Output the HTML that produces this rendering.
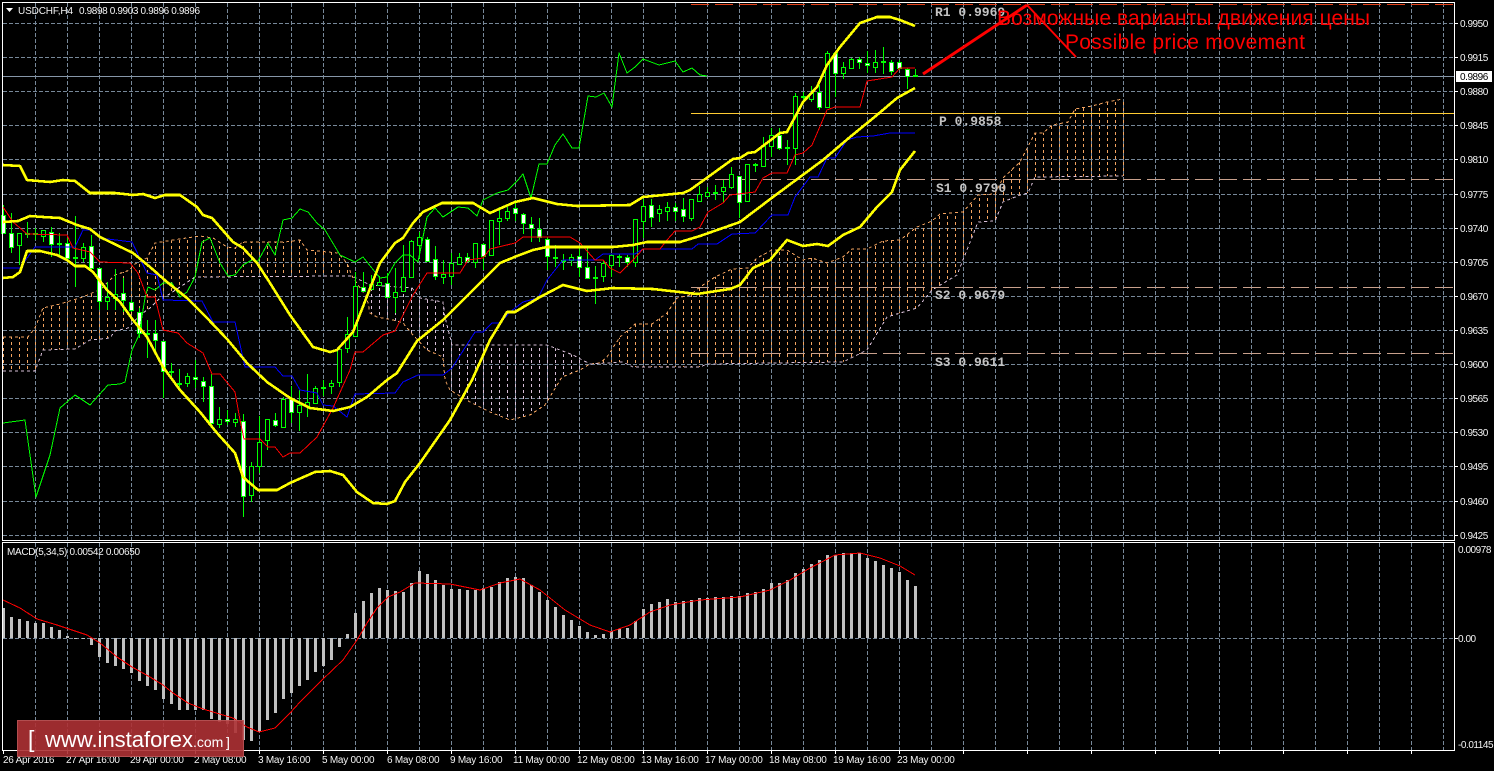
<!DOCTYPE html>
<html><head><meta charset="utf-8"><title>USDCHF,H4</title>
<style>
html,body{margin:0;padding:0;background:#000;width:1494px;height:771px;overflow:hidden}
svg{display:block}
.t{font-family:"Liberation Sans",sans-serif;font-size:10px;fill:#f4f4f4}
.p{letter-spacing:-.45px}
.a{letter-spacing:-.25px}
.f{font-family:"Liberation Mono",monospace;font-size:13px;font-weight:bold;fill:#c4c4c4}
.r{font-family:"Liberation Sans","Noto Sans CJK SC",sans-serif;font-size:21px;fill:#f00}
.l{font-family:"Liberation Sans",sans-serif;fill:#fff}
</style></head><body>
<svg width="1494" height="771" viewBox="0 0 1494 771" xmlns="http://www.w3.org/2000/svg">
<defs>
<pattern id="gv" x="0" y="3" width="32" height="6" patternUnits="userSpaceOnUse"><rect x="3" width="1" height="4" fill="#778899"/></pattern>
<pattern id="po" x="0" y="0" width="8" height="6" patternUnits="userSpaceOnUse"><rect x="3" width="1" height="3" fill="#f4a460"/></pattern>
<pattern id="pt" x="0" y="0" width="8" height="6" patternUnits="userSpaceOnUse"><rect x="3" width="1" height="3" fill="#d8bfd8"/></pattern>
</defs>
<rect width="1494" height="771" fill="#000"/>

<!-- grid -->
<rect x="32" y="3" width="1420" height="537" fill="url(#gv)" shape-rendering="crispEdges"/>
<rect x="32" y="543" width="1420" height="207" fill="url(#gv)" shape-rendering="crispEdges"/>
<path shape-rendering="crispEdges" fill="none" stroke="#778899" stroke-dasharray="4 2" d="M3 23.5H1454M3 57.5H1454M3 91.5H1454M3 125.5H1454M3 159.5H1454M3 194.5H1454M3 228.5H1454M3 262.5H1454M3 296.5H1454M3 330.5H1454M3 364.5H1454M3 398.5H1454M3 432.5H1454M3 466.5H1454M3 501.5H1454M3 535.5H1454M3 638.5H1454"/>
<!-- current price -->
<path shape-rendering="crispEdges" stroke="#8696a8" d="M3 76.5H1454"/>

<!-- ichimoku cloud hatching -->
<g shape-rendering="crispEdges">
<polygon fill="url(#po)" points="3,337 28,337 35,328 43,308 60,304 83,297 92,293 100,290 115,275 130,270 133,265 147,258 155,243 173,240 200,236 213,238 227,247 235,248 243,242 285,242 300,240 307,250 338,253 347,263 352,276 195,277 180,287 168,295 160,298 150,308 140,315 128,328 115,331 110,338 90,340 75,349 43,350 35,371 3,371"/>
<polygon fill="url(#pt)" points="352,276 370,285 412,288 420,298 443,302 445,317 452,345 547,345 573,355 590,364 580,370 562,377 545,405 530,415 510,420 490,412 470,402 450,390 445,380 443,357 427,350 413,335 403,323 393,320 377,317 370,313 367,298"/>
<polygon fill="url(#po)" points="590,364 600,363 607,357 620,337 635,324 652,324 667,313 677,298 690,295 700,287 715,277 732,269 748,268 757,258 772,250 787,250 803,260 812,258 827,263 843,257 852,249 867,249 883,241 900,240 917,227 932,221 940,214 963,212 972,202 978,195 995,194 1003,178 1020,162 1035,133 1043,133 1052,125 1068,122 1075,109 1092,106 1107,102 1124,99 1124,176 1035,177 1028,193 1020,195 1003,202 995,221 978,222 963,260 957,275 932,290 917,308 887,317 867,350 843,362 707,364 700,367 633,367 623,362"/>
<polyline fill="none" stroke="#f4a460" stroke-dasharray="3 3" points="3,337 28,337 35,328 43,308 60,304 83,297 92,293 100,290 115,275 130,270 133,265 147,258 155,243 173,240 200,236 213,238 227,247 235,248 243,242 285,242 300,240 307,250 338,253 347,263 352,276 367,298 370,313 377,317 393,320 403,323 413,335 427,350 443,357 445,380 450,390 470,402 490,412 510,420 530,415 545,405 562,377 580,370 590,364 600,363 607,357 620,337 635,324 652,324 667,313 677,298 690,295 700,287 715,277 732,269 748,268 757,258 772,250 787,250 803,260 812,258 827,263 843,257 852,249 867,249 883,241 900,240 917,227 932,221 940,214 963,212 972,202 978,195 995,194 1003,178 1020,162 1035,133 1043,133 1052,125 1068,122 1075,109 1092,106 1107,102 1123,99"/>
<polyline fill="none" stroke="#d8bfd8" stroke-dasharray="3 3" points="3,371 35,371 43,350 75,349 90,340 110,338 115,331 128,328 140,315 150,308 160,298 168,295 180,287 195,277 352,276 370,285 412,288 420,298 443,302 445,317 452,345 547,345 573,355 590,364 623,362 633,367 700,367 707,364 843,362 867,350 887,317 917,308 932,290 957,275 963,260 978,222 995,221 1003,202 1020,195 1028,193 1035,177 1123,176"/>
</g>

<!-- pivot lines -->
<g shape-rendering="crispEdges" fill="none">
<path stroke="#e8431a" stroke-dasharray="18 6" d="M691 4.5H1454"/>
<path stroke="#ffcc33" d="M691 113.5H1454"/>
<path stroke="#c8a08c" stroke-dasharray="18 6" d="M691 179.5H1454M691 287.5H1454M691 353.5H1454"/>
</g>

<!-- candle wicks -->
<path shape-rendering="crispEdges" fill="none" stroke="#0f0" d="M3.5 205V233M11.5 213V253M19.5 233V265M27.5 222V238M35.5 228V240M43.5 230V242M51.5 227V257M59.5 233V257M67.5 238V258M75.5 216V287M83.5 243V262M91.5 235V270M99.5 268V310M107.5 282V310M115.5 269V310M123.5 278V312M131.5 300V312M139.5 308V338M147.5 320V358M155.5 320V352M163.5 341V398M171.5 363V380M179.5 369V387M187.5 373V387M195.5 360V388M203.5 377V402M211.5 374V428M219.5 407V428M227.5 410V425M235.5 413V427M243.5 414V517M251.5 462V502M259.5 416V473M267.5 419V450M275.5 413V427M283.5 397V427M291.5 386V423M299.5 390V431M307.5 374V417M315.5 386V403M323.5 380V396M331.5 380V394M339.5 349V387M347.5 317V353M355.5 272V337M363.5 272V291M371.5 275V290M379.5 276V286M387.5 273V298M395.5 268V313M403.5 245V291M411.5 240V278M419.5 232V258M427.5 237V262M435.5 246V280M443.5 260V284M451.5 253V285M459.5 253V264M467.5 253V261M475.5 243V268M483.5 243V270M491.5 220V256M499.5 207V245M507.5 207V221M515.5 200V221M523.5 213V234M531.5 217V242M539.5 218V242M547.5 237V270M555.5 245V267M563.5 254V270M571.5 254V266M579.5 247V277M587.5 247V279M595.5 266V304M603.5 260V282M611.5 254V277M619.5 254V267M627.5 255V267M635.5 219V267M643.5 199V238M651.5 199V227M659.5 205V222M667.5 202V221M675.5 203V221M683.5 198V222M691.5 199V221M699.5 186V202M707.5 187V197M715.5 185V200M723.5 180V203M731.5 167V189M739.5 176V218M747.5 164V202M755.5 163V172M763.5 137V166M771.5 128V157M779.5 128V150M787.5 140V165M795.5 93V165M803.5 92V100M811.5 86V102M819.5 85V110M827.5 51V107M835.5 52V97M843.5 62V79M851.5 58V68M859.5 57V69M867.5 51V73M875.5 50V73M883.5 47V74M891.5 60V75M899.5 60V70M907.5 68V89M915.5 69V77"/>
<!-- bearish bodies -->
<path shape-rendering="crispEdges" fill="#fff" stroke="#0f0" d="M1.5 215.5h4V233.5h-4zM9.5 233.5h4V247.5h-4zM49.5 232.5h4V244.5h-4zM65.5 243.5h4V258.5h-4zM89.5 246.5h4V268.5h-4zM97.5 268.5h4V301.5h-4zM121.5 293.5h4V300.5h-4zM129.5 302.5h4V310.5h-4zM137.5 312.5h4V333.5h-4zM153.5 333.5h4V340.5h-4zM161.5 341.5h4V371.5h-4zM193.5 377.5h4V379.5h-4zM201.5 381.5h4V386.5h-4zM209.5 386.5h4V423.5h-4zM225.5 419.5h4V421.5h-4zM241.5 421.5h4V496.5h-4zM273.5 420.5h4V425.5h-4zM289.5 399.5h4V412.5h-4zM361.5 287.5h4V291.5h-4zM385.5 283.5h4V297.5h-4zM425.5 239.5h4V261.5h-4zM433.5 259.5h4V276.5h-4zM465.5 257.5h4V261.5h-4zM481.5 244.5h4V256.5h-4zM513.5 208.5h4V213.5h-4zM521.5 214.5h4V223.5h-4zM529.5 224.5h4V228.5h-4zM537.5 229.5h4V237.5h-4zM545.5 239.5h4V256.5h-4zM577.5 256.5h4V267.5h-4zM585.5 267.5h4V278.5h-4zM625.5 257.5h4V262.5h-4zM649.5 205.5h4V217.5h-4zM673.5 207.5h4V211.5h-4zM681.5 209.5h4V216.5h-4zM737.5 176.5h4V202.5h-4zM777.5 135.5h4V148.5h-4zM801.5 96.5h4V97.5h-4zM817.5 92.5h4V107.5h-4zM833.5 53.5h4V73.5h-4zM857.5 59.5h4V62.5h-4zM865.5 63.5h4V65.5h-4zM889.5 62.5h4V71.5h-4zM897.5 62.5h4V68.5h-4zM905.5 69.5h4V76.5h-4z"/>
<!-- bullish bodies -->
<path shape-rendering="crispEdges" fill="#000" stroke="#0f0" d="M17.5 233.5h4V245.5h-4zM41.5 230.5h4V236.5h-4zM81.5 247.5h4V258.5h-4zM105.5 297.5h4V301.5h-4zM113.5 294.5h4V298.5h-4zM185.5 376.5h4V383.5h-4zM217.5 419.5h4V424.5h-4zM233.5 419.5h4V422.5h-4zM249.5 466.5h4V495.5h-4zM257.5 442.5h4V466.5h-4zM265.5 419.5h4V440.5h-4zM281.5 399.5h4V427.5h-4zM297.5 405.5h4V412.5h-4zM305.5 402.5h4V406.5h-4zM313.5 388.5h4V403.5h-4zM329.5 383.5h4V386.5h-4zM337.5 349.5h4V382.5h-4zM345.5 334.5h4V348.5h-4zM353.5 286.5h4V336.5h-4zM369.5 284.5h4V289.5h-4zM377.5 282.5h4V285.5h-4zM393.5 292.5h4V297.5h-4zM401.5 277.5h4V291.5h-4zM409.5 241.5h4V277.5h-4zM417.5 237.5h4V245.5h-4zM441.5 274.5h4V277.5h-4zM449.5 263.5h4V276.5h-4zM457.5 257.5h4V264.5h-4zM473.5 243.5h4V262.5h-4zM489.5 220.5h4V255.5h-4zM497.5 218.5h4V221.5h-4zM505.5 211.5h4V218.5h-4zM569.5 257.5h4V260.5h-4zM601.5 263.5h4V276.5h-4zM609.5 255.5h4V265.5h-4zM633.5 219.5h4V262.5h-4zM641.5 206.5h4V221.5h-4zM657.5 209.5h4V213.5h-4zM665.5 207.5h4V211.5h-4zM689.5 199.5h4V218.5h-4zM697.5 194.5h4V201.5h-4zM705.5 192.5h4V196.5h-4zM721.5 187.5h4V191.5h-4zM729.5 174.5h4V187.5h-4zM745.5 164.5h4V201.5h-4zM761.5 146.5h4V166.5h-4zM769.5 135.5h4V146.5h-4zM793.5 96.5h4V148.5h-4zM809.5 93.5h4V99.5h-4zM825.5 53.5h4V107.5h-4zM841.5 67.5h4V73.5h-4zM849.5 59.5h4V68.5h-4zM873.5 62.5h4V67.5h-4zM913.5 75.5h4V76.5h-4z"/>
<!-- dojis -->
<path shape-rendering="crispEdges" fill="none" stroke="#0f0" stroke-width="2" d="M25 234h5M33 234h5M57 244h5M73 258h5M145 334h5M169 372h5M177 384h5M321 388h5M553 258h5M561 261h5M593 278h5M617 257h5M713 193h5M753 165h5M785 148h5M881 62h5"/>

<!-- indicator lines -->
<g fill="none" stroke-linejoin="round" shape-rendering="crispEdges">
<polyline stroke="#0f0" points="3,423 25,420 36,497 50,455 60,408 75,395 90,405 108,385 120,384 125,382 132,350 139,335 145,298 148,287 155,290 163,283 172,283 180,297 187,292 195,277 202,242 210,238 220,263 228,276 235,275 243,265 252,260 258,261 268,243 275,255 283,220 292,218 300,209 308,212 317,223 325,230 340,255 355,262 363,257 375,272 380,278 387,277 395,263 403,255 410,255 418,262 427,217 435,208 443,217 458,207 468,208 477,216 483,200 497,193 508,190 518,180 523,174 531,198 539,164 547,164 555,145 563,134 572,148 579,148 588,96 596,97 604,93 612,107 619,53 627,73 635,67 643,59 659,65 675,61 683,72 692,68 700,75 707,76"/>
<polyline stroke="#00f" points="3,268 20,268 35,247 75,247 83,230 90,230 100,238 132,242 147,273 157,275 163,300 202,301 213,322 235,322 245,367 275,367 283,376 292,376 300,390 317,393 323,405 333,406 347,417 355,394 395,393 403,382 418,375 443,375 452,368 475,332 483,332 492,323 500,323 510,312 523,302 538,298 547,280 563,260 595,260 603,254 635,254 643,249 692,249 698,244 717,244 732,234 755,233 772,215 788,215 795,197 810,177 818,177 827,158 835,158 847,140 857,137 873,136 890,133 915,133"/>
<polyline stroke="#f00" points="3,207 13,222 27,234 67,235 73,248 90,252 100,262 130,263 138,273 147,297 155,297 163,330 178,333 187,343 203,353 212,374 220,374 235,392 240,420 244,439 260,439 268,447 275,447 283,457 290,453 300,453 317,437 333,408 350,370 355,352 363,352 383,335 395,331 403,315 413,295 427,273 460,273 468,260 483,258 490,249 515,243 523,237 570,237 580,243 595,260 603,260 610,268 620,273 633,260 643,249 660,249 667,240 675,231 692,231 700,227 708,212 723,203 730,195 755,192 763,178 772,173 787,173 795,155 803,153 812,145 827,110 835,107 860,107 867,81 892,77 900,68 915,68"/>
<g stroke="#ff0" stroke-width="2.6">
<polyline points="3,165 20,166 27,180 50,182 63,180 75,181 90,193 115,193 133,195 143,194 155,198 165,195 180,195 197,207 203,215 212,218 233,242 243,248 257,263 270,283 290,315 313,347 330,352 337,350 353,332 380,263 395,243 403,238 413,223 423,212 442,203 473,203 490,213 515,202 533,198 557,204 577,206 630,205 643,197 683,193 690,190 733,159 740,158 748,153 755,152 780,133 787,132 795,117 803,102 817,87 827,65 840,47 860,23 877,17 890,17 900,20 915,26"/>
<polyline points="3,222 18,221 30,216 43,217 60,218 77,225 90,229 100,237 133,253 150,267 167,282 187,298 207,318 227,339 247,363 267,382 290,398 310,408 333,411 350,407 367,397 387,380 397,373 417,341 443,320 480,283 500,263 517,256 533,250 547,247 577,247 613,247 633,245 647,242 680,242 700,236 740,222 773,197 823,160 850,137 877,115 897,98 915,88"/>
<polyline points="3,278 13,277 20,272 25,257 27,251 40,251 57,255 67,260 75,266 85,266 93,272 107,290 120,302 133,320 147,337 163,367 180,390 200,412 217,433 235,453 243,477 258,490 277,490 290,483 315,472 330,471 343,475 357,492 373,503 387,504 395,501 405,482 420,463 450,420 472,380 490,340 507,312 515,312 540,297 563,285 587,291 613,288 653,289 697,294 730,289 740,285 753,268 770,260 787,240 803,246 817,244 828,246 843,235 860,227 877,207 892,192 900,170 915,151"/>
</g>
</g>

<!-- red annotation -->
<path fill="none" stroke="#f00" stroke-width="3" d="M923 74L1027 5"/>
<path fill="none" stroke="#f00" stroke-width="2" d="M1027 5L1076 57"/>

<!-- MACD bars -->
<path shape-rendering="crispEdges" fill="none" stroke="#c0c0c0" stroke-width="3" d="M3.5 638V608M11.5 638V617M19.5 638V619M27.5 638V621M35.5 638V623M43.5 638V623M51.5 638V627M59.5 638V630M67.5 638V636M75.5 638V639M83.5 638V639M91.5 638V645M99.5 638V657M107.5 638V663M115.5 638V666M123.5 638V669M131.5 638V673M139.5 638V681M147.5 638V686M155.5 638V690M163.5 638V699M171.5 638V704M179.5 638V710M187.5 638V710M195.5 638V710M203.5 638V710M211.5 638V719M219.5 638V722M227.5 638V724M235.5 638V733M243.5 638V740M251.5 638V741M259.5 638V732M267.5 638V720M275.5 638V713M283.5 638V699M291.5 638V693M299.5 638V686M307.5 638V680M315.5 638V672M323.5 638V666M331.5 638V660M339.5 638V647M347.5 638V634M355.5 638V613M363.5 638V601M371.5 638V593M379.5 638V588M387.5 638V590M395.5 638V591M403.5 638V592M411.5 638V583M419.5 638V571M427.5 638V574M435.5 638V580M443.5 638V585M451.5 638V589M459.5 638V589M467.5 638V590M475.5 638V590M483.5 638V588M491.5 638V587M499.5 638V582M507.5 638V578M515.5 638V577M523.5 638V578M531.5 638V585M539.5 638V592M547.5 638V600M555.5 638V607M563.5 638V615M571.5 638V620M579.5 638V626M587.5 638V632M595.5 638V635M603.5 638V634M611.5 638V631M619.5 638V629M627.5 638V628M635.5 638V621M643.5 638V609M651.5 638V604M659.5 638V602M667.5 638V599M675.5 638V602M683.5 638V601M691.5 638V600M699.5 638V598M707.5 638V598M715.5 638V597M723.5 638V597M731.5 638V596M739.5 638V596M747.5 638V593M755.5 638V592M763.5 638V589M771.5 638V583M779.5 638V583M787.5 638V580M795.5 638V573M803.5 638V569M811.5 638V564M819.5 638V560M827.5 638V555M835.5 638V555M843.5 638V553M851.5 638V553M859.5 638V553M867.5 638V558M875.5 638V561M883.5 638V565M891.5 638V568M899.5 638V572M907.5 638V580M915.5 638V586"/>
<polyline shape-rendering="crispEdges" fill="none" stroke="#f00" points="3,600 20,608 37,619 57,625 87,635 100,643 117,657 132,667 150,677 163,685 173,693 188,703 203,709 233,718 247,727 259,732 275,728 290,713 300,702 322,680 343,660 357,640 367,623 377,608 388,597 400,592 415,583 450,584 480,590 500,583 520,579 540,590 565,610 590,625 610,632 630,625 650,612 670,605 700,600 740,597 770,590 790,580 810,568 835,555 860,553 880,558 900,566 915,575"/>

<!-- frame -->
<path shape-rendering="crispEdges" fill="none" stroke="#fff" d="M2.5 2.5H1454.5V540.5H2.5ZM2.5 542.5H1454.5V750.5H2.5Z"/>
<path shape-rendering="crispEdges" stroke="#fff" d="M1455 23.5h3M1455 57.5h3M1455 91.5h3M1455 125.5h3M1455 159.5h3M1455 194.5h3M1455 228.5h3M1455 262.5h3M1455 296.5h3M1455 330.5h3M1455 364.5h3M1455 398.5h3M1455 432.5h3M1455 466.5h3M1455 501.5h3M1455 535.5h3M1455 638.5h3M3.5 751v3M67.5 751v3M131.5 751v3M195.5 751v3M259.5 751v3M323.5 751v3M387.5 751v3M451.5 751v3M515.5 751v3M579.5 751v3M643.5 751v3M707.5 751v3M771.5 751v3M835.5 751v3M899.5 751v3M963.5 751v3M1027.5 751v3M1091.5 751v3M1155.5 751v3M1219.5 751v3M1283.5 751v3M1347.5 751v3M1411.5 751v3"/>

<!-- header -->
<polygon points="6,8 13,8 9.5,12" fill="#fff"/>
<text class="t" x="18" y="14" textLength="55">USDCHF,H4</text>
<text class="t" x="79" y="14" textLength="121">0.9898 0.9903 0.9896 0.9896</text>
<text class="t" x="7" y="555" textLength="133">MACD(5,34,5) 0.00542 0.00650</text>

<!-- price axis -->
<g class="t p">
<text x="1460" y="27">0.9950</text><text x="1460" y="61">0.9915</text><text x="1460" y="95">0.9880</text><text x="1460" y="129">0.9845</text><text x="1460" y="163">0.9810</text><text x="1460" y="198">0.9775</text><text x="1460" y="232">0.9740</text><text x="1460" y="266">0.9705</text><text x="1460" y="300">0.9670</text><text x="1460" y="334">0.9635</text><text x="1460" y="368">0.9600</text><text x="1460" y="402">0.9565</text><text x="1460" y="436">0.9530</text><text x="1460" y="470">0.9495</text><text x="1460" y="505">0.9460</text><text x="1460" y="539">0.9425</text>
<text x="1458" y="553">0.00978</text><text x="1458" y="642">0.00</text><text x="1458" y="748">-0.01145</text>
</g>
<rect x="1456" y="71" width="36" height="11" fill="#fff"/>
<text class="t p" x="1460" y="80" style="fill:#000">0.9896</text>

<!-- time axis -->
<g class="t a">
<text x="3" y="763">26 Apr 2016</text><text x="66" y="763">27 Apr 16:00</text><text x="130" y="763">29 Apr 00:00</text><text x="194" y="763">2 May 08:00</text><text x="258" y="763">3 May 16:00</text><text x="322" y="763">5 May 00:00</text><text x="387" y="763">6 May 08:00</text><text x="450" y="763">9 May 16:00</text><text x="513" y="763">11 May 00:00</text><text x="577" y="763">12 May 08:00</text><text x="641" y="763">13 May 16:00</text><text x="705" y="763">17 May 00:00</text><text x="769" y="763">18 May 08:00</text><text x="833" y="763">19 May 16:00</text><text x="897" y="763">23 May 00:00</text>
</g>

<!-- pivot labels -->
<text class="f" x="935" y="16">R1 0.9969</text>
<text class="f" x="939" y="125">P 0.9858</text>
<text class="f" x="936" y="192">S1 0.9790</text>
<text class="f" x="935" y="299">S2 0.9679</text>
<text class="f" x="935" y="366">S3 0.9611</text>

<!-- red text -->
<text class="r" x="997" y="25" textLength="373">Возможные варианты движения цены</text>
<text class="r" x="1065" y="49" textLength="240">Possible price movement</text>

<!-- logo -->
<rect x="17.5" y="720.5" width="226" height="36" fill="#ad3134" fill-opacity=".9" stroke="#bd5456" stroke-opacity=".9"/>
<text class="l" x="28" y="747" font-size="23">[</text>
<text class="l" x="45" y="747" font-size="22">www.instaforex</text>
<text class="l" x="193" y="747" font-size="14">.com</text>
<text class="l" x="226" y="747" font-size="14">]</text>
</svg>
</body></html>
